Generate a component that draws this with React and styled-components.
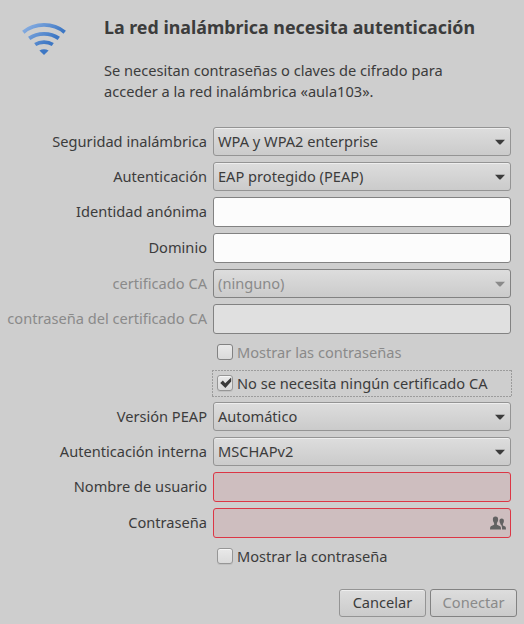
import React from "react";
import styled, { createGlobalStyle, css } from "styled-components";

const GlobalStyle = createGlobalStyle`
  * { box-sizing: border-box; }
  body {
    margin: 0;
    background: #cecece;
    color: #3c3c3c;
    font-family: "Noto Sans", sans-serif;
    font-size: 14.61px;
    line-height: 20px;
  }
`;

const Dialog = styled.main`
  width: 524px;
  height: 624px;
  display: flex;
  flex-direction: column;
  background: #cecece;
`;

const Header = styled.header`
  display: flex;
  height: 127px;
  padding: 17px 12px 0 20px;
`;

const WifiIcon = styled.svg`
  width: 48px;
  height: 48px;
  flex: none;
`;

const Intro = styled.div`
  margin-left: 36px;
`;

const Title = styled.h1`
  margin: 0 0 23px;
  font-size: 17.82px;
  line-height: 20px;
  font-weight: 700;
  white-space: nowrap;
`;

const Message = styled.p`
  margin: 0;
  line-height: 21px;
  white-space: nowrap;
`;

const Form = styled.form`
  display: grid;
  grid-template-columns: 207px 298px;
  column-gap: 6px;
  row-gap: 6px;
`;

const Label = styled.label`
  align-self: center;
  padding-bottom: 2px;
  text-align: right;
  white-space: nowrap;
  color: ${(p) => (p.$muted ? "#8a8a8a" : "inherit")};
`;

const raised = css`
  border: 1px solid ${(p) => (p.$muted ? "#828282" : "#949494")};
  border-radius: 3px;
  background: linear-gradient(#dddddd, #cbcbcb);
  box-shadow: ${(p) => (p.$muted ? "none" : "inset 0 1px #eeeeee")};
  color: ${(p) => (p.$muted ? "#8a8a8a" : "#3c3c3c")};
  font: inherit;
`;

const Combo = styled.button`
  ${raised}
  display: flex;
  align-items: center;
  justify-content: space-between;
  height: 29px;
  padding: 0 5px 0 4px;
`;

const ComboText = styled.span`
  padding-bottom: 2px;
`;

const Arrow = styled.svg`
  width: 10px;
  height: 6px;
  fill: currentColor;
`;

const tones = {
  normal: css`border-color: #828282; background: #fcfcfc;`,
  muted: css`border-color: #828282; background: #e0e0e0;`,
  error: css`border-color: #dc3645; background: #cebebf;`,
};

const Entry = styled.div`
  display: flex;
  align-items: center;
  justify-content: flex-end;
  height: 30px;
  padding: 0 4px;
  border: 1px solid;
  border-radius: 3px;
  ${(p) => tones[p.$tone]}
`;

const PeopleIcon = styled.svg`
  width: 16px;
  height: 14px;
  fill: #626262;
`;

const dashX = "repeating-linear-gradient(90deg, #9c9c9c 0 2px, transparent 2px 3px)";
const dashY = "repeating-linear-gradient(#9c9c9c 0 2px, transparent 2px 3px)";

const CheckRow = styled.div`
  grid-column: 2;
  display: flex;
  align-items: center;
  gap: 4px;
  height: 24px;
  padding-left: 4px;
  white-space: nowrap;
  color: ${(p) => (p.$muted ? "#8a8a8a" : "inherit")};
  ${(p) =>
    p.$focused &&
    css`
      height: 27px;
      margin: 0 -1px -1px;
      padding: 0 0 1px 5px;
      background:
        ${dashX} top / 100% 1px no-repeat,
        ${dashX} bottom / 100% 1px no-repeat,
        ${dashY} left / 1px 100% no-repeat,
        ${dashY} right / 1px 100% no-repeat;
    `}
`;

const CheckBox = styled.span`
  display: grid;
  place-items: center;
  flex: none;
  width: 16px;
  height: 16px;
  border: 1px solid ${(p) => (p.$muted ? "#828282" : "#969696")};
  border-radius: 3px;
  background: linear-gradient(#e9e9e9, #dadada);
  box-shadow: ${(p) => (p.$muted ? "none" : "inset 0 1px #f6f6f6, 0 1px #c0c0c0")};
`;

const CheckMark = styled.svg`
  width: 14px;
  height: 14px;
  fill: #3a3a3a;
`;

const Actions = styled.footer`
  display: flex;
  justify-content: flex-end;
  gap: 4px;
  padding: 21px 7px 0 0;
`;

const ActionButton = styled.button`
  ${raised}
  width: 87px;
  height: 28px;
  padding: 0 0 2px;
`;

function SelectField({ label, value, muted }) {
  return (
    <>
      <Label $muted={muted}>{label}</Label>
      <Combo type="button" $muted={muted} disabled={muted}>
        <ComboText>{value}</ComboText>
        <Arrow viewBox="0 0 10 6">
          <path d="M0 .8h10L5.8 5.2Q5 6 4.2 5.2z" />
        </Arrow>
      </Combo>
    </>
  );
}

function TextField({ label, tone = "normal", children }) {
  return (
    <>
      <Label $muted={tone === "muted"}>{label}</Label>
      <Entry $tone={tone}>{children}</Entry>
    </>
  );
}

function CheckField({ label, muted, checked, focused }) {
  return (
    <CheckRow $muted={muted} $focused={focused}>
      <CheckBox $muted={muted}>
        {checked && (
          <CheckMark viewBox="0 0 14 14">
            <path d="M2.2 7 4.9 4.6 7.2 7.2 13.2 1.4V5.4L7.4 11.9z" />
          </CheckMark>
        )}
      </CheckBox>
      <span>{label}</span>
    </CheckRow>
  );
}

export default function App() {
  return (
    <>
      <GlobalStyle />
      <Dialog>
        <Header>
          <WifiIcon viewBox="0 0 48 48">
            <defs>
              <linearGradient id="signal" gradientUnits="userSpaceOnUse" x1="6" y1="5" x2="27" y2="28">
                <stop offset="0" stopColor="#8fb3e4" />
                <stop offset="1" stopColor="#3d77c4" />
              </linearGradient>
            </defs>
            <g fill="none" stroke="url(#signal)" strokeWidth="3.8">
              <path d="M3.3 15.2Q12 7.9 24 7.9T44.7 15.2" />
              <path d="M9.2 21.4Q15.5 16.8 24 16.8T38.8 21.4" />
              <path d="M15.2 27.5Q19 25.1 24 25.1T32.8 27.5" />
            </g>
            <path d="M19.4 33.6Q24 31 28.6 33.6L24 38z" fill="#3d77c4" />
          </WifiIcon>
          <Intro>
            <Title>La red inalámbrica necesita autenticación</Title>
            <Message>
              Se necesitan contraseñas o claves de cifrado para
              <br />
              acceder a la red inalámbrica «aula103».
            </Message>
          </Intro>
        </Header>
        <Form>
          <SelectField label="Seguridad inalámbrica" value="WPA y WPA2 enterprise" />
          <SelectField label="Autenticación" value="EAP protegido (PEAP)" />
          <TextField label="Identidad anónima" />
          <TextField label="Dominio" />
          <SelectField label="certificado CA" value="(ninguno)" muted />
          <TextField label="contraseña del certificado CA" tone="muted" />
          <CheckField label="Mostrar las contraseñas" muted />
          <CheckField label="No se necesita ningún certificado CA" checked focused />
          <SelectField label="Versión PEAP" value="Automático" />
          <SelectField label="Autenticación interna" value="MSCHAPv2" />
          <TextField label="Nombre de usuario" tone="error" />
          <TextField label="Contraseña" tone="error">
            <PeopleIcon viewBox="0 0 16 14">
              <path d="M5.5.5C3.6.5 2.8 1.8 2.9 3.6c0 1.5.5 2.5 1.2 3.3v1.8L.8 10.2Q0 10.7 0 13.5h11q0-2.8-.8-3.3L6.9 8.7V6.9C7.6 6.1 8.1 5 8.1 3.6 8.2 1.8 7.4.5 5.5.5z" />
              <path d="M11.7 2.5c-1.6 0-2.3 1.2-2.2 2.6 0 1.2.4 2 1 2.7v.8q1.6.7 1.6 4.9H16q0-2.5-.7-2.9l-2.4-1.2V7.8c.6-.7 1-1.5 1-2.7.1-1.4-.6-2.6-2.2-2.6z" />
            </PeopleIcon>
          </TextField>
          <CheckField label="Mostrar la contraseña" />
        </Form>
        <Actions>
          <ActionButton type="button">Cancelar</ActionButton>
          <ActionButton type="button" $muted disabled>Conectar</ActionButton>
        </Actions>
      </Dialog>
    </>
  );
}
